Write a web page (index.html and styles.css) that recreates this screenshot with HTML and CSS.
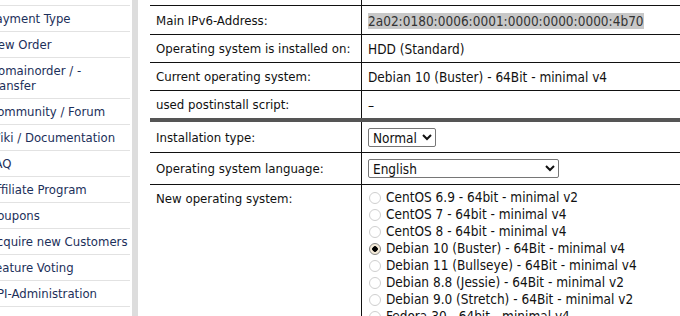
FILE: index.html
```
<!DOCTYPE html>
<html lang="en">
<head>
    <meta charset="UTF-8">
    <title>Server Reinstall</title>
    <link rel="stylesheet" href="styles.css">
</head>
<body>
    <div class="sidebar">
        <div class="nav-item nav-top"></div>
        <div class="nav-item">Payment Type</div>
        <div class="nav-item">New Order</div>
        <div class="nav-item">Domainorder / -<br>Transfer</div>
        <div class="nav-item">Community / Forum</div>
        <div class="nav-item">Wiki / Documentation</div>
        <div class="nav-item">FAQ</div>
        <div class="nav-item">Affiliate Program</div>
        <div class="nav-item">Coupons</div>
        <div class="nav-item">Acquire new Customers</div>
        <div class="nav-item">Feature Voting</div>
        <div class="nav-item">API-Administration</div>
        <div class="nav-item"></div>
    </div>

    <div class="content">
        <table class="info">
            <tr class="row-top"><td class="label"></td><td class="value"></td></tr>
            <tr>
                <td class="label">Main IPv6-Address:</td>
                <td class="value"><span class="selected">2a02:0180:0006:0001:0000:0000:0000:4b70</span></td>
            </tr>
            <tr>
                <td class="label">Operating system is installed on:</td>
                <td class="value">HDD (Standard)</td>
            </tr>
            <tr>
                <td class="label">Current operating system:</td>
                <td class="value">Debian 10 (Buster) - 64Bit - minimal v4</td>
            </tr>
            <tr class="row-split">
                <td class="label">used postinstall script:</td>
                <td class="value">&ndash;</td>
            </tr>
            <tr class="row-form">
                <td class="label">Installation type:</td>
                <td class="value">
                    <select class="sel-type">
                        <option>Normal</option>
                        <option>Custom</option>
                    </select>
                </td>
            </tr>
            <tr class="row-form row-lang">
                <td class="label">Operating system language:</td>
                <td class="value">
                    <select class="sel-lang">
                        <option>English</option>
                        <option>Deutsch</option>
                    </select>
                </td>
            </tr>
            <tr>
                <td class="label os-label">New operating system:</td>
                <td class="value">
                    <div class="os-list">
                        <label class="os"><input type="radio" name="os"> CentOS 6.9 - 64bit - minimal v2</label>
                        <label class="os"><input type="radio" name="os"> CentOS 7 - 64bit - minimal v4</label>
                        <label class="os"><input type="radio" name="os"> CentOS 8 - 64bit - minimal v4</label>
                        <label class="os"><input type="radio" name="os" checked> Debian 10 (Buster) - 64Bit - minimal v4</label>
                        <label class="os"><input type="radio" name="os"> Debian 11 (Bullseye) - 64Bit - minimal v4</label>
                        <label class="os"><input type="radio" name="os"> Debian 8.8 (Jessie) - 64Bit - minimal v2</label>
                        <label class="os"><input type="radio" name="os"> Debian 9.0 (Stretch) - 64Bit - minimal v2</label>
                        <label class="os"><input type="radio" name="os"> Fedora 30 - 64bit - minimal v4</label>
                    </div>
                </td>
            </tr>
        </table>
    </div>
</body>
</html>
```

FILE: styles.css
```
body {
    margin: 0;
    display: flex;
    align-items: flex-start;
    font-family: "DejaVu Sans Condensed", "DejaVu Sans", sans-serif;
    font-size: 13px;
    color: #111;
    background: white;
    overflow: hidden;
    height: 316px;
}

.sidebar {
    width: 141px;
    margin-left: -11px;
    flex-shrink: 0;
    border-right: 6px solid #dddddd;
    padding-right: 2px;
    margin-top: -20px;
    min-height: 400px;
}

.nav-item {
    padding: 5px 0;
    line-height: 15px;
    min-height: 15px;
    border-bottom: 1px solid #e2e2e2;
    color: #1c2f5a;
    white-space: nowrap;
}

.content {
    flex: 1;
    padding-left: 12px;
    min-width: 0;
}

.info {
    border-collapse: collapse;
    margin-top: -22px;
    width: 560px;
    font-size: 13.5px;
    table-layout: fixed;
}

.info td {
    border-bottom: 1px solid #111;
    padding: 6px 6px 5px;
    height: 16px;
    line-height: 16px;
    vertical-align: middle;
    white-space: nowrap;
}

.info tr:nth-child(2) td {
    padding-top: 7px;
}

.info td.label {
    width: 199px;
    border-right: 1px solid #111;
    font-size: 13.1px;
}

.info .row-split td {
    border-bottom: 4px solid #555;
}

.info .row-form td {
    height: 19px;
    padding-top: 6px;
    padding-bottom: 5px;
}

.info .row-lang td {
    padding-bottom: 6px;
}

.selected {
    background: #c8c8c8;
    color: #333;
}

select {
    font-family: inherit;
    font-size: 13.5px;
    color: #111;
    height: 19px;
    border: 1px solid #767676;
    border-radius: 2px;
    background: white;
    padding: 0;
    display: block;
}

.sel-type {
    width: 68px;
}

.sel-lang {
    width: 191px;
}

.os-label {
    vertical-align: top !important;
}

.os-list {
    display: flex;
    flex-direction: column;
    margin-top: -2px;
}

.os {
    display: flex;
    align-items: center;
    line-height: 17px;
    height: 17px;
}

.os input {
    appearance: none;
    width: 12px;
    height: 12px;
    margin: 0 5px 0 1px;
    border: 1px solid #cfcfcf;
    border-radius: 50%;
    background: white;
    box-sizing: border-box;
}

.os input:checked {
    border-color: #8a8a8a;
    background: radial-gradient(circle, #000 0 2.5px, #f4ead8 3px);
}
```
